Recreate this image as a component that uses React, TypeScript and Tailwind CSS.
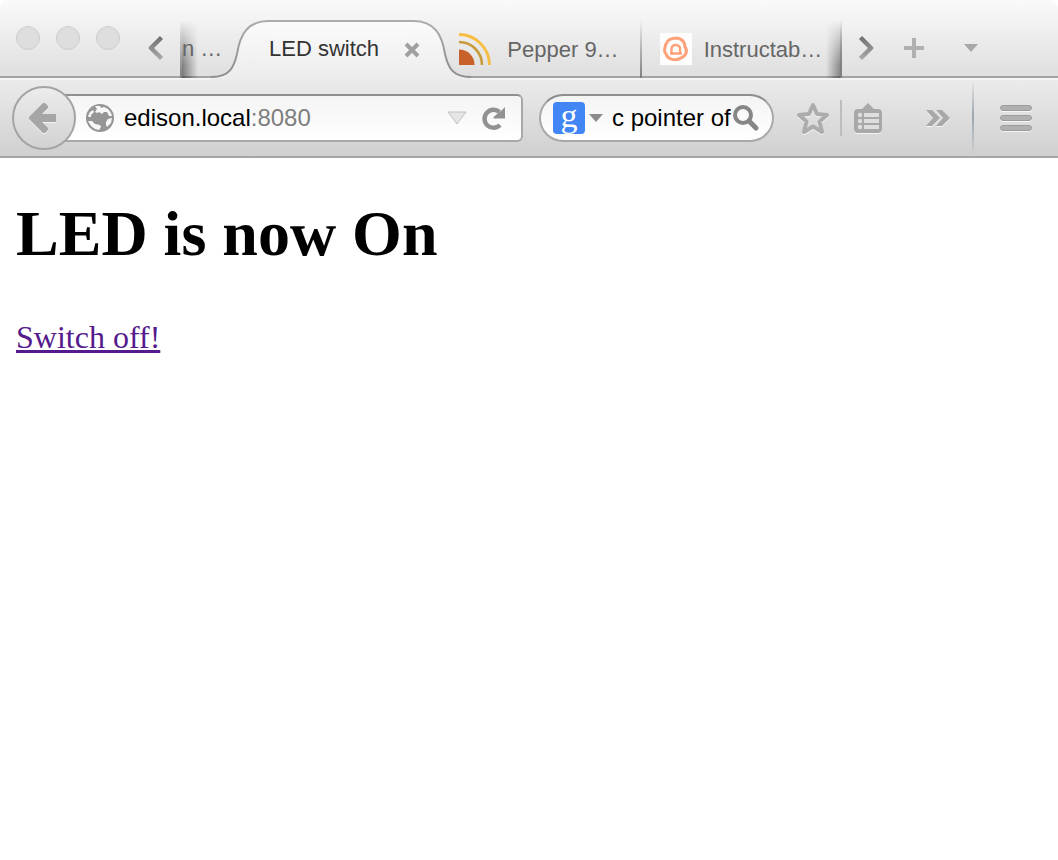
import React from 'react';

const Chevron: React.FC<{ flip?: boolean }> = ({ flip }) => (
  <svg width="16" height="26" viewBox="0 0 16 26" fill="none" className={flip ? '-scale-x-100' : ''}>
    <defs>
      <linearGradient id="chevron" x1="0" y1="0" x2="0" y2="1">
        <stop offset="0" stopColor="#727272" />
        <stop offset="1" stopColor="#a8a8a8" />
      </linearGradient>
    </defs>
    <path d="M13.500 2.500L3 13L13.500 23.500" stroke="url(#chevron)" strokeWidth="4.500" strokeLinejoin="round" />
  </svg>
);

const FeedIcon: React.FC = () => (
  <svg width="32" height="32" viewBox="0 0 32 32" fill="none" className="shrink-0">
    <path d="M0 16.500C9 16.500 15.500 23 15.500 32H0Z" fill="#c8622a" />
    <path d="M0 9A23 23 0 0 1 23 32" stroke="#c99a3c" strokeWidth="2.600" />
    <path d="M0 1.500A30.500 30.500 0 0 1 30.500 32" stroke="#f6bd41" strokeWidth="2.800" />
  </svg>
);

const RobotIcon: React.FC = () => (
  <svg width="32" height="32" viewBox="0 0 32 32" fill="none" className="shrink-0 bg-[#fdfdfd]">
    <path d="M6 21C3 18 5 14 6 11C8 5 14 5 17 5C22 6 25 9 25 14C28 18 26 23 21 25C16 28 8 27 6 21Z" stroke="#fea078" strokeWidth="3" />
    <path d="M11.500 20.500V15.500Q12 12 15.500 12Q19.500 12 20 15.500V20.500ZM10 20.500H22" stroke="#fea078" strokeWidth="2.400" />
  </svg>
);

const GlobeIcon: React.FC = () => (
  <svg width="28" height="28" viewBox="0 0 28 28" className="shrink-0">
    <circle cx="14" cy="14" r="14" fill="#969696" />
    <path d="M9 2L14 2L15 4L18 3L22 5L25 9L26 12L23 12L21 8L18 8L16 10L13 8L11 9L9 8L11 5Z" fill="#f8f8f8" />
    <path d="M4 8L7 6L8 8L5 11L5 13L3 13L2 12Z" fill="#f8f8f8" />
    <path d="M2 17L6 17L9 20L14 21L15 23L13 26L9 25L5 22Z" fill="#f8f8f8" />
    <path d="M22 15L26 14L25 19L21 23L20 21L20 18Z" fill="#f8f8f8" />
  </svg>
);

const TabEdge: React.FC<{ right?: boolean }> = ({ right }) => (
  <svg width="60" height="60" viewBox="0 0 60 60" fill="none" className={right ? 'shrink-0 -scale-x-100' : 'shrink-0'}>
    <defs>
      <linearGradient id="tab-fill" x1="0" y1="0" x2="0" y2="1">
        <stop offset="0" stopColor="#fbfbfb" />
        <stop offset="1" stopColor="#ececec" />
      </linearGradient>
      <linearGradient id="tab-line" x1="0" y1="0" x2="0" y2="1">
        <stop offset="0" stopColor="#acacac" />
        <stop offset="1" stopColor="#8c8c8c" />
      </linearGradient>
    </defs>
    <path d="M0 57C19 57 23 47 26 34C29 15 36 1 58 1H60V60H0Z" fill="url(#tab-fill)" />
    <path d="M0 57C19 57 23 47 26 34C29 15 36 1 58 1H60" stroke="url(#tab-line)" strokeWidth="2" />
  </svg>
);

const Divider: React.FC = () => (
  <span className="absolute right-0 top-5 h-[58px] w-[2px] bg-linear-to-b from-transparent to-[#808080]" />
);

const TabStrip: React.FC = () => (
  <div className="flex h-[78px] items-stretch border-b-2 border-[#a3a3a3] bg-linear-to-b from-[#fafafa] to-[#dfdfdf] text-[22px] text-[#666]">
    <div className="flex gap-4 pl-4 pt-[26px]">
      <button aria-label="Close window" className="size-6 rounded-full border border-[#cdcdcd] bg-[#dedede]" />
      <button aria-label="Minimize window" className="size-6 rounded-full border border-[#cdcdcd] bg-[#dedede]" />
      <button aria-label="Zoom window" className="size-6 rounded-full border border-[#cdcdcd] bg-[#dedede]" />
    </div>
    <button aria-label="Scroll tabs left" className="relative flex w-[62px] items-center pl-7 pt-5">
      <Chevron />
      <Divider />
    </button>

    <div className="grid h-[78px] min-w-0 flex-1 grid-cols-[59px_repeat(3,minmax(0,1fr))]">
      <button className="relative pt-[18px] text-left">
        <span className="absolute left-0 top-5 h-[58px] w-4 bg-linear-to-r from-black/45 to-transparent mask-t-from-20%" />
        <span className="relative whitespace-nowrap">n …</span>
      </button>
      <div className="relative flex items-center pt-[18px]">
        <div className="absolute -left-[30px] -right-[30px] top-5 flex h-[60px]">
          <TabEdge />
          <div className="h-[60px] flex-1 border-t-2 border-[#acacac] bg-linear-to-b from-[#fbfbfb] to-[#ececec]" />
          <TabEdge right />
        </div>
        <button className="relative min-w-0 flex-1 truncate pl-7 text-left text-[#333]">LED switch</button>
        <button aria-label="Close tab" className="relative mr-5 pt-1">
          <svg width="18" height="16" viewBox="0 0 18 16" fill="none">
            <path d="M3 2L15 14M15 2L3 14" stroke="#a0a0a0" strokeWidth="4" />
          </svg>
        </button>
      </div>
      <button className="relative flex items-center gap-4 pl-[18px] pr-5 pt-5">
        <FeedIcon />
        <span className="whitespace-nowrap">Pepper 9…</span>
        <Divider />
      </button>
      <button className="relative flex items-center gap-3 pl-[18px] pr-4 pt-5">
        <RobotIcon />
        <span className="whitespace-nowrap">Instructab…</span>
        <span className="absolute right-0 top-5 h-[58px] w-4 bg-linear-to-l from-black/45 to-transparent mask-t-from-20%" />
        <Divider />
      </button>
    </div>

    <button aria-label="Scroll tabs right" className="flex w-[62px] items-center pl-4 pt-5">
      <Chevron flip />
    </button>
    <button aria-label="Open a new tab" className="flex w-[60px] items-center pt-5">
      <svg width="20" height="20" viewBox="0 0 20 20">
        <path d="M8 0H12V8H20V12H12V20H8V12H0V8H8Z" fill="#b0b0b0" />
      </svg>
    </button>
    <button aria-label="List all tabs" className="flex w-[94px] items-center pt-5">
      <svg width="14" height="8" viewBox="0 0 14 8">
        <path d="M0 0H14L7 8Z" fill="#a8a8a8" />
      </svg>
    </button>
  </div>
);

const AddressBar: React.FC = () => (
  <div className="flex min-w-0 flex-1 items-center">
    <button aria-label="Go back" className="relative z-10 flex size-16 shrink-0 items-center justify-center rounded-full border-2 border-[#a4a4a4] bg-linear-to-b from-[#ececec] to-[#d2d2d2] pr-1">
      <svg width="28" height="32" viewBox="0 0 28 32" className="drop-shadow-[0_1px_0_#f4f4f4]">
        <path d="M15 1L17 1L20 4L20 6L14 12H28V20H14L20 26L20 28L17 31L15 31L1 17V15Z" fill="#a6a6a6" />
      </svg>
    </button>
    <div className="-ml-3 flex h-12 min-w-0 flex-1 items-center rounded-r-md border-2 border-[#a8a8a8] border-t-[#8e8e8e] bg-linear-to-b from-[#f4f4f4] to-white pl-5 pr-4">
      <GlobeIcon />
      <label className="ml-[10px] flex min-w-0 flex-1 items-center text-2xl text-[#7e7e7e]">
        <input aria-label="Address" defaultValue="edison.local" className="field-sizing-content min-w-0 text-black outline-none" />
        <span>:8080</span>
      </label>
      <button aria-label="Show history">
        <svg width="20" height="14" viewBox="0 0 20 14">
          <path d="M1 1H19L10 13Z" fill="#e6e6e6" stroke="#c0c0c0" />
        </svg>
      </button>
      <button aria-label="Reload page" className="ml-[14px]">
        <svg width="24" height="26" viewBox="0 0 24 26" fill="none">
          <path d="M18.500 7A9 9 0 1 0 19 20" stroke="#929292" strokeWidth="4.400" />
          <path d="M24 2V13.500H12.500V12L16 9L20 6Z" fill="#929292" />
        </svg>
      </button>
    </div>
  </div>
);

const SearchBar: React.FC = () => (
  <div className="ml-4 flex h-12 w-[235px] shrink-0 items-center rounded-full border-2 border-[#a8a8a8] border-t-[#8e8e8e] bg-linear-to-b from-[#f4f4f4] to-white pl-3 pr-3">
    <button aria-label="Choose search engine" className="flex items-center gap-1">
      <span className="flex size-8 items-center justify-center rounded-sm bg-[#4285f4] pb-1 font-['Liberation_Serif',serif] text-[34px] leading-7 text-white">g</span>
      <svg width="14" height="8" viewBox="0 0 14 8">
        <path d="M0 0H14L7 8Z" fill="#8c8c8c" />
      </svg>
    </button>
    <input aria-label="Search" defaultValue="c pointer of" className="ml-[9px] w-0 min-w-0 flex-1 text-2xl text-black outline-none" />
    <button aria-label="Submit search">
      <svg width="28" height="28" viewBox="0 0 28 28" fill="none">
        <circle cx="11" cy="11" r="8" stroke="#868686" strokeWidth="4" />
        <path d="M17 17L24 24" stroke="#868686" strokeWidth="5" strokeLinecap="round" />
      </svg>
    </button>
  </div>
);

const Toolbar: React.FC = () => (
  <div className="flex h-20 items-center border-t-2 border-b-2 border-t-[#f4f4f4] border-b-[#a6a6a6] bg-linear-to-b from-[#ebebeb] to-[#d0d0d0] pl-3">
    <AddressBar />
    <SearchBar />
    <button aria-label="Bookmark this page" className="ml-[22px] drop-shadow-[0_1px_0_#f4f4f4]">
      <svg width="34" height="34" viewBox="0 0 34 34" fill="none">
        <path d="M17 4L21 13L31 14L23.500 20.500L26 31L17 25.500L8 31L10.500 20.500L3 14L13 13Z" stroke="#acacac" strokeWidth="4" strokeLinejoin="round" />
      </svg>
    </button>
    <span className="ml-[10px] h-9 w-[2px] bg-[#bdbdbd]" />
    <button aria-label="Bookmarks menu" className="ml-3 drop-shadow-[0_1px_0_#f4f4f4]">
      <svg width="28" height="30" viewBox="0 0 28 30">
        <path d="M14 0L20 6H24Q28 6 28 10V26Q28 30 24 30H4Q0 30 0 26V10Q0 6 4 6H8Z" fill="#a8a8a8" />
        <path d="M10 10H25V14H10ZM10 16H25V20H10ZM10 22H25V26H10Z" fill="#dedede" />
        <circle cx="6" cy="12" r="2.200" fill="#dedede" />
        <circle cx="6" cy="18" r="2.200" fill="#dedede" />
        <circle cx="6" cy="24" r="2.200" fill="#dedede" />
      </svg>
    </button>
    <button aria-label="More tools" className="ml-11 drop-shadow-[0_1px_0_#f4f4f4]">
      <svg width="24" height="16" viewBox="0 0 24 16">
        <path d="M0 0H6L14 8L6 16H0L7 8ZM10 0H16L24 8L16 16H10L17 8Z" fill="#a8a8a8" />
      </svg>
    </button>
    <span className="ml-[22px] h-full w-[2px] bg-linear-to-b from-transparent via-[#9aa6b0] to-transparent" />
    <button aria-label="Open menu" className="ml-[26px] mr-[26px] drop-shadow-[0_1px_0_#f4f4f4]">
      <svg width="32" height="26" viewBox="0 0 32 26" fill="#b0b0b0" stroke="#9c9c9c">
        <rect x=".5" y=".5" width="31" height="5" rx="2.500" />
        <rect x=".5" y="10.500" width="31" height="5" rx="2.500" />
        <rect x=".5" y="20.500" width="31" height="5" rx="2.500" />
      </svg>
    </button>
  </div>
);

const App: React.FC = () => {
  return (
    <div className="min-h-screen bg-white font-['Liberation_Sans',Arial,sans-serif]">
      <header className="overflow-hidden rounded-t-lg">
        <TabStrip />
        <Toolbar />
      </header>
      <main className="px-4 pt-10 font-['Liberation_Serif','Times_New_Roman',serif] text-black">
        <h1 className="text-[64px] font-bold leading-[72px]">LED is now On</h1>
        <p className="mt-12 text-[32px] leading-[38px]">
          <a href="#off" className="text-[#551a8b] underline">Switch off!</a>
        </p>
      </main>
    </div>
  );
};

export default App;
